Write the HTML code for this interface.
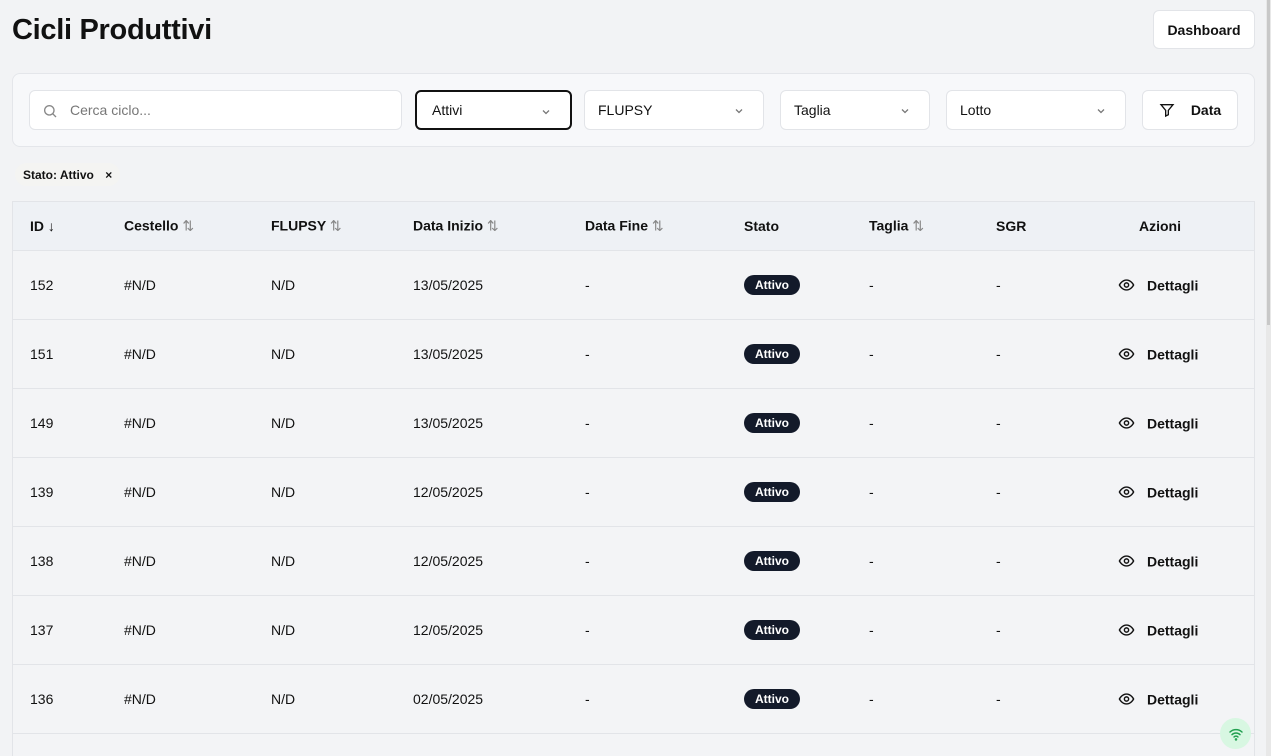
<!DOCTYPE html>
<html style="width:1271px;height:756px;overflow:hidden"><head><meta charset="utf-8"><style>
*{box-sizing:border-box;margin:0;padding:0}
body{width:1271px;height:756px;overflow:hidden;background:#f2f3f5;font-family:"Liberation Sans",sans-serif;color:#111;position:relative;font-size:14px}
.abs{position:absolute}
h1{position:absolute;left:12px;top:14px;font-size:29px;font-weight:700;letter-spacing:-0.3px}
.btn{position:absolute;background:#fff;border:1px solid #e2e4e8;border-radius:6px;display:flex;align-items:center;justify-content:center;font-weight:700;font-size:14px}
.card{position:absolute;left:12px;top:73px;width:1243px;height:74px;background:#f7f8fa;border:1px solid #e4e6ea;border-radius:8px}
.in{position:absolute;top:90px;height:40px;background:#fff;border:1px solid #e2e4e8;border-radius:6px;display:flex;align-items:center;padding-left:13px;font-size:14px}
.chev{position:absolute;right:18px;top:14px}
.chip{position:absolute;left:15px;top:163px;height:23px;width:105px;background:#f4f4f2;border-radius:12px;font-size:12px;font-weight:600;padding:5px 0 0 8px}
.tbl{position:absolute;left:12px;top:201px;width:1243px;height:560px;border:1px solid #e2e4e8;border-bottom:none;background:#f3f4f6;overflow:hidden}
.hd{position:absolute;left:0;top:0;width:100%;height:49px;background:#eef1f5;border-bottom:1px solid #e2e4e8}
.row{position:absolute;left:0;width:100%;height:69px;border-bottom:1px solid #e2e4e8}
.c{position:absolute;top:50%;transform:translateY(-50%);white-space:nowrap}
.h{font-weight:700}
.s{color:#888;font-weight:400}
.badge{background:#131a2a;color:#fff;font-weight:700;font-size:12px;border-radius:11px;padding:3px 11px}
</style></head><body>
<h1>Cicli Produttivi</h1>
<div class="btn" style="left:1153px;top:10px;width:102px;height:39px">Dashboard</div>
<div class="card"></div>
<div class="in" style="left:29px;width:373px;color:#777;padding-left:40px">
<svg class="abs" style="left:12px;top:12px" width="16" height="16" viewBox="0 0 24 24" fill="none" stroke="#888" stroke-width="2"><circle cx="11" cy="11" r="7"/><path d="M21 21l-5-5"/></svg>Cerca ciclo...</div>
<div class="in" style="left:415px;width:157px;border:2px solid #111;padding-left:15px">Attivi<svg class="chev" width="12" height="12" viewBox="0 0 24 24" fill="none" stroke="#777" stroke-width="2.5"><path d="M6 9l6 6 6-6"/></svg></div>
<div class="in" style="left:584px;width:180px">FLUPSY<svg class="chev" width="12" height="12" viewBox="0 0 24 24" fill="none" stroke="#777" stroke-width="2.5"><path d="M6 9l6 6 6-6"/></svg></div>
<div class="in" style="left:780px;width:150px">Taglia<svg class="chev" width="12" height="12" viewBox="0 0 24 24" fill="none" stroke="#777" stroke-width="2.5"><path d="M6 9l6 6 6-6"/></svg></div>
<div class="in" style="left:946px;width:180px">Lotto<svg class="chev" width="12" height="12" viewBox="0 0 24 24" fill="none" stroke="#777" stroke-width="2.5"><path d="M6 9l6 6 6-6"/></svg></div>
<div class="btn" style="left:1142px;top:90px;width:96px;height:40px"><svg width="16" height="16" viewBox="0 0 24 24" fill="none" stroke="#111" stroke-width="2" style="margin-right:16px"><path d="M3 4h18l-7 8.5V19l-4 2v-8.5z"/></svg>Data</div>
<div class="chip">Stato: Attivo <span style="margin-left:8px">×</span></div>
<div class="tbl" style="height:555px">
<div class="hd">
<span class="c h" style="left:17px">ID ↓</span>
<span class="c h" style="left:111px">Cestello <span class="s">⇅</span></span>
<span class="c h" style="left:258px">FLUPSY <span class="s">⇅</span></span>
<span class="c h" style="left:400px">Data Inizio <span class="s">⇅</span></span>
<span class="c h" style="left:572px">Data Fine <span class="s">⇅</span></span>
<span class="c h" style="left:731px">Stato</span>
<span class="c h" style="left:856px">Taglia <span class="s">⇅</span></span>
<span class="c h" style="left:983px">SGR</span>
<span class="c h" style="left:1126px">Azioni</span>
</div>
<div id="rows"></div>
</div>
<div class="abs" style="left:1220px;top:718px;width:31px;height:31px;border-radius:50%;background:#d8f7e2;display:flex;align-items:center;justify-content:center"><svg width="16" height="16" viewBox="0 0 24 24" fill="none" stroke="#22a050" stroke-width="2.2" stroke-linecap="round"><path d="M3 9a13 13 0 0 1 18 0M6 13a8.5 8.5 0 0 1 12 0M9 16.5a4 4 0 0 1 6 0"/><circle cx="12" cy="20" r="0.8"/></svg></div>
<div class="abs" style="left:1266px;top:0;width:5px;height:756px;background:#e8e8e8"></div>
<div class="abs" style="left:1267px;top:0;width:3px;height:325px;background:#c8c8c8"></div>
<script>
var d=[["152","13/05/2025"],["151","13/05/2025"],["149","13/05/2025"],["139","12/05/2025"],["138","12/05/2025"],["137","12/05/2025"],["136","02/05/2025"]];
var h="";d.forEach(function(r,i){h+='<div class="row" style="top:'+(49+i*69)+'px"><span class="c" style="left:17px">'+r[0]+'</span><span class="c" style="left:111px">#N/D</span><span class="c" style="left:258px">N/D</span><span class="c" style="left:400px">'+r[1]+'</span><span class="c" style="left:572px">-</span><span class="c badge" style="left:731px">Attivo</span><span class="c" style="left:856px">-</span><span class="c" style="left:983px">-</span><span class="c" style="left:1105px;font-weight:700;display:flex;align-items:center"><svg width="17" height="17" viewBox="0 0 24 24" fill="none" stroke="#111" stroke-width="2" style="margin-right:12px"><path d="M2 12s3.5-7 10-7 10 7 10 7-3.5 7-10 7S2 12 2 12z"/><circle cx="12" cy="12" r="3"/></svg>Dettagli</span></div>'});
document.getElementById("rows").innerHTML=h;
</script>
</body></html>
